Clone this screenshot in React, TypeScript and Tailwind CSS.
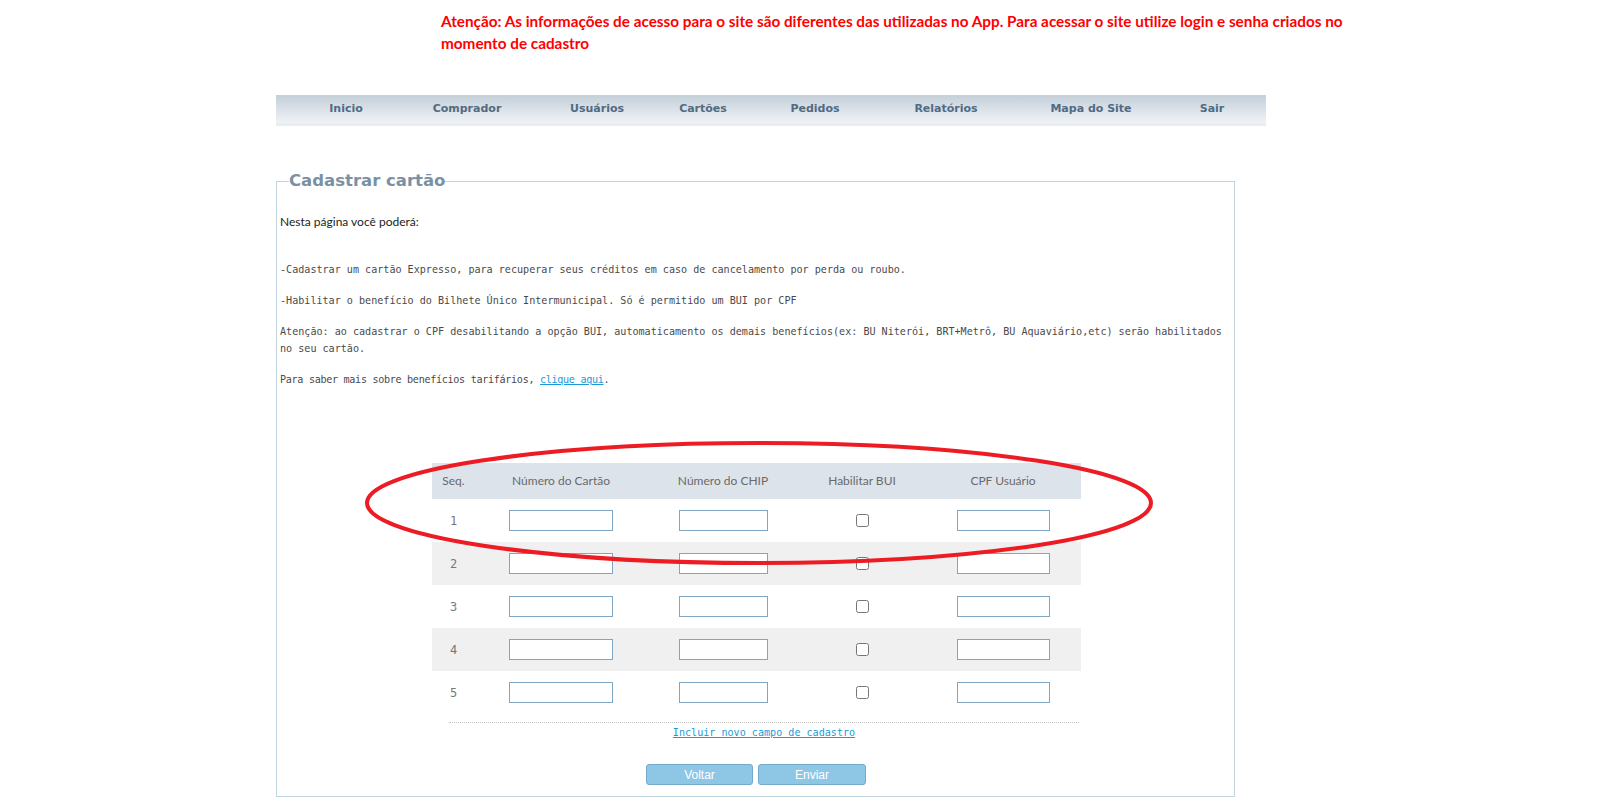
import { useState } from "react";

const navItems = [
  { label: "Inicio", w: "w-[140px]" },
  { label: "Comprador", w: "w-[102px]" },
  { label: "Usuários", w: "w-[158px]" },
  { label: "Cartões", w: "w-[54px]" },
  { label: "Pedidos", w: "w-[170px]" },
  { label: "Relatórios", w: "w-[92px]" },
  { label: "Mapa do Site", w: "w-[198px]" },
  { label: "Sair", w: "w-[44px]" },
];

const mono = "font-['DejaVu_Sans_Mono','Liberation_Mono',monospace]";

export default function App() {
  const [rows, setRows] = useState([1, 2, 3, 4, 5]);

  return (
    <div className="relative min-h-screen bg-white pl-[276px] pt-[10px]">
      {/* aviso */}
      <p className="ml-[165px] w-[930px] font-['Lato',sans-serif] text-[15.3px] font-bold leading-[22px] text-[#ff0000]">
        Atenção: As informações de acesso para o site são diferentes das utilizadas no App. Para acessar o site utilize login e senha criados no momento de cadastro
      </p>

      {/* menu */}
      <nav className="mt-[41px] flex h-[31px] w-[990px] items-center border-b-[3px] border-[#e7edf2] bg-gradient-to-b from-[#c4cfd9] to-[#f0f3f6] pt-px">
        {navItems.map((item) => (
          <a
            key={item.label}
            className={`${item.w} cursor-pointer text-center font-['DejaVu_Sans',sans-serif] text-[11px] font-bold text-[#506b82]`}
          >
            {item.label}
          </a>
        ))}
      </nav>

      {/* formulario */}
      <fieldset className="mt-[46px] w-[959px] border border-[#c3d4e1] pl-[3px] pr-[3px] pb-[11px]">
        <legend className="ml-[9px] font-['DejaVu_Sans',sans-serif] text-[16.5px] font-bold leading-[18px] text-[#7a91a5]">
          Cadastrar cartão
        </legend>

        <p className="mt-[24px] font-['Lato',sans-serif] text-[12px] leading-[15px] text-[#222]">Nesta página você poderá:</p>

        <div className={`${mono} mt-[32px] flex flex-col gap-[14px] text-[10.1px] leading-[17px] text-[#4a4a4a]`}>
          <p>-Cadastrar um cartão Expresso, para recuperar seus créditos em caso de cancelamento por perda ou roubo.</p>
          <p>-Habilitar o benefício do Bilhete Único Intermunicipal. Só é permitido um BUI por CPF</p>
          <p>
            Atenção: ao cadastrar o CPF desabilitando a opção BUI, automaticamento os demais benefícios(ex: BU Niterói, BRT+Metrô, BU Aquaviário,etc) serão habilitados no seu cartão.
          </p>
          <p className="tracking-[-0.3px]">
            Para saber mais sobre benefícios tarifários,{" "}
            <a className="cursor-pointer text-[#1a9bd7] underline">clique aqui</a>.
          </p>
        </div>

        {/* tabela */}
        <div className="ml-[152px] mt-[75px] w-[649px]">
          <div className="grid h-[36px] grid-cols-[43px_172px_152px_126px_156px] items-center bg-[#dde3ea] font-['Lato',sans-serif] text-[12px] text-[#6a6a6a]">
            <span className="text-center">Seq.</span>
            <span className="text-center">Número do Cartão</span>
            <span className="text-center">Número do CHIP</span>
            <span className="text-center">Habilitar BUI</span>
            <span className="text-center">CPF Usuário</span>
          </div>
          {rows.map((n, i) => (
            <div
              key={n}
              className={`grid h-[43px] grid-cols-[43px_172px_152px_126px_156px] items-center ${i % 2 === 1 ? "bg-[#f0f0f0]" : "bg-white"}`}
            >
              <span className={`${mono} text-center text-[12px] text-[#777]`}>{n}</span>
              <div className="flex justify-center">
                <input className="h-[21px] w-[104px] border border-[#7fa6c3] bg-white" />
              </div>
              <div className="flex justify-center">
                <input className="h-[21px] w-[89px] border border-[#7fa6c3] bg-white" />
              </div>
              <div className="flex justify-center">
                <input type="checkbox" className="m-0 h-[13px] w-[13px]" />
              </div>
              <div className="flex justify-center">
                <input className="h-[21px] w-[93px] border border-[#7fa6c3] bg-white" />
              </div>
            </div>
          ))}
        </div>

        <div className={`${mono} ml-[169px] mt-[8px] w-[630px] border-t border-dotted border-[#c4c4c4] pt-[3px] text-center text-[10.1px] leading-[14px]`}>
          <a
            onClick={() => setRows([...rows, rows.length + 1])}
            className="cursor-pointer text-[#1a9bd7] underline"
          >
            Incluir novo campo de cadastro
          </a>
        </div>

        <div className="ml-[366px] mt-[24px] flex gap-[5px]">
          <button className="h-[21px] w-[107px] rounded-[3px] border border-[#75a9cb] bg-[#8ec6e6] font-['Liberation_Sans',sans-serif] text-[12px] text-white">
            Voltar
          </button>
          <button className="h-[21px] w-[108px] rounded-[3px] border border-[#75a9cb] bg-[#8ec6e6] font-['Liberation_Sans',sans-serif] text-[12px] text-white">
            Enviar
          </button>
        </div>
      </fieldset>

      {/* marcacao em vermelho */}
      <svg className="pointer-events-none absolute left-[363px] top-[439px]" width="792" height="128" viewBox="0 0 792 128">
        <ellipse cx="396" cy="64" rx="392" ry="60" fill="none" stroke="#ed1c24" strokeWidth="4" />
      </svg>
    </div>
  );
}
